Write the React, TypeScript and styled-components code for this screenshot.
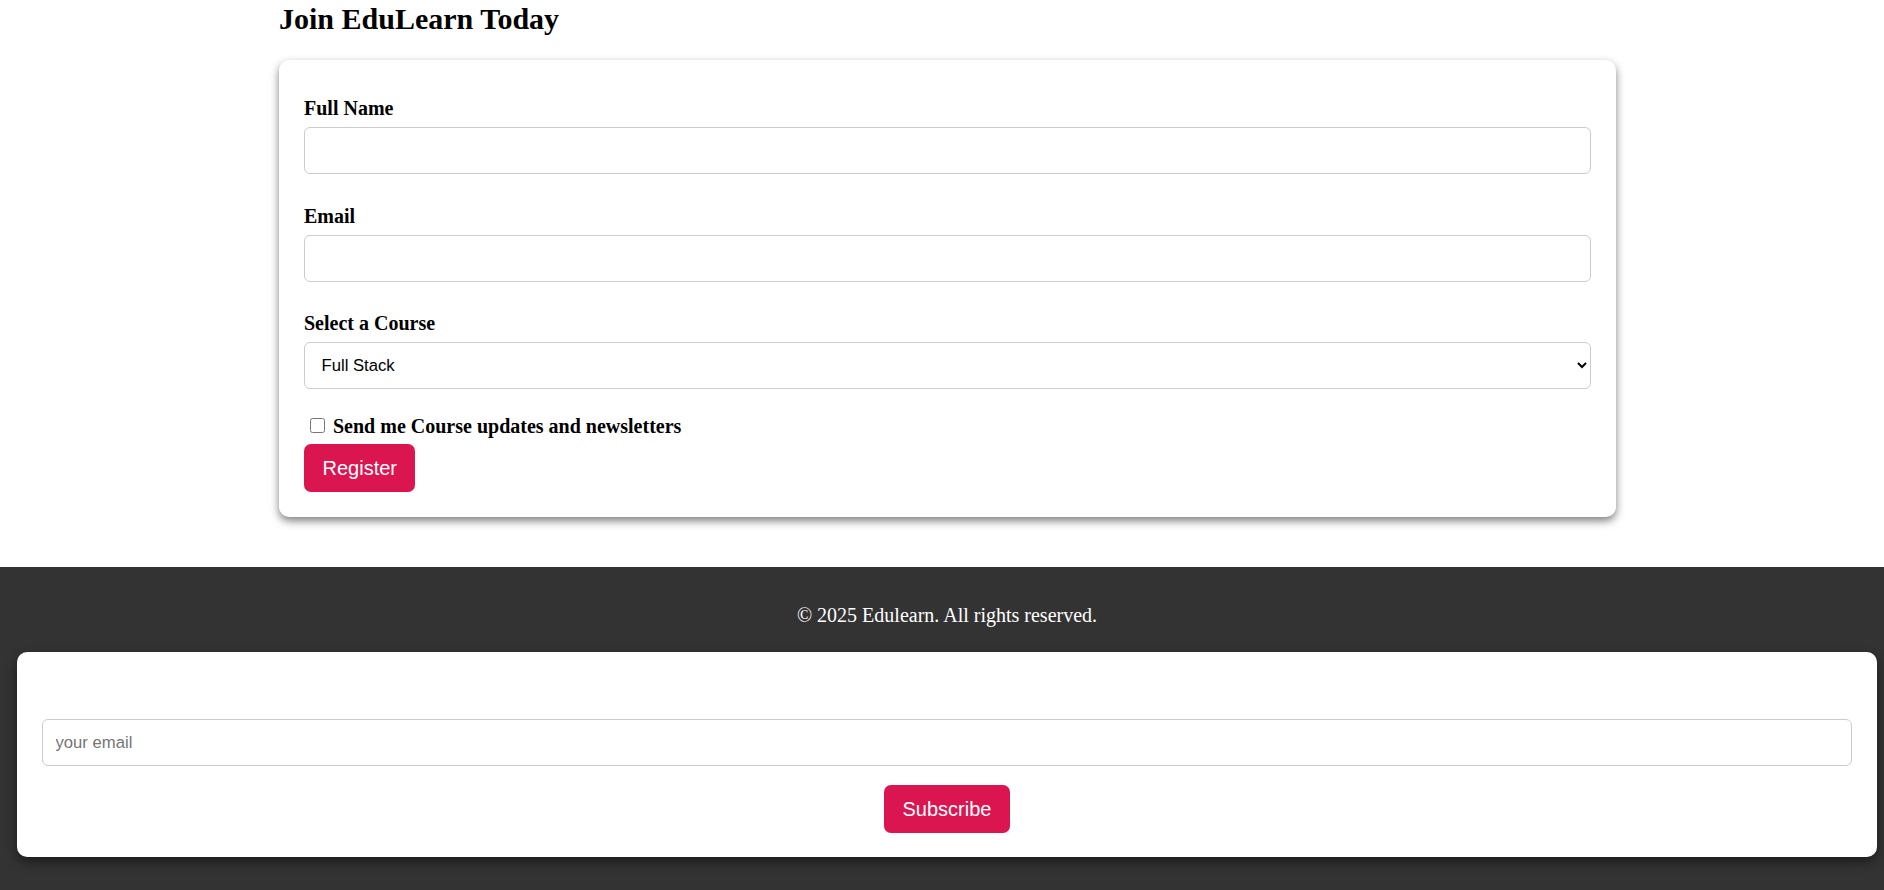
import React from "react";
import styled, { createGlobalStyle } from "styled-components";

const GlobalStyle = createGlobalStyle`
  html, body {
    margin: 0;
    padding: 0;
    background: #ffffff;
    font-family: "Liberation Serif", "Times New Roman", serif;
    color: #000000;
  }
  * { box-sizing: border-box; }
`;

const Main = styled.main`
  width: 1337px;
  margin-left: 279px;
  padding-top: 1px;
  padding-bottom: 50px;
`;

const Title = styled.h2`
  margin: 0 0 24px;
  font-size: 30px;
  font-weight: bold;
  line-height: 35px;
`;

const Card = styled.form`
  background: #ffffff;
  border-radius: 10px;
  box-shadow: 0 4px 9px rgba(0, 0, 0, 0.5);
  padding: 37px 25px 25px;
  display: flex;
  flex-direction: column;
`;

const Field = styled.div`
  display: flex;
  flex-direction: column;
  margin-bottom: 30.5px;
  &:last-of-type { margin-bottom: 0; }
`;

const Label = styled.label`
  display: block;
  font-size: 20px;
  font-weight: bold;
  line-height: 23px;
  margin-bottom: 7px;
`;

const TextInput = styled.input`
  width: 100%;
  height: 47px;
  padding: 0 12.5px;
  border: 1px solid #cccccc;
  border-radius: 6px;
  font-family: "Liberation Sans", Arial, sans-serif;
  font-size: 16.67px;
  color: #000;
  background: #fff;
  outline: none;
  &::placeholder { color: #757575; }
`;

const Select = styled.select`
  width: 100%;
  height: 47px;
  padding: 0 12.5px;
  border: 1px solid #cccccc;
  border-radius: 6px;
  font-family: "Liberation Sans", Arial, sans-serif;
  font-size: 16.67px;
  color: #000;
  background-color: #fff;
  outline: none;
`;

const CheckRow = styled.label`
  display: block;
  margin-top: 26px;
  font-size: 20px;
  font-weight: bold;
  line-height: 23px;
`;

const Check = styled.input`
  width: 15px;
  height: 15px;
  margin: 0 3px 0 6px;
  vertical-align: baseline;
`;

const Button = styled.button<{ $top?: number }>`
  align-self: ${(p) => (p.$top !== undefined ? "center" : "flex-start")};
  margin-top: ${(p) => p.$top ?? 6}px;
  background: #da1550;
  color: #ffffff;
  border: none;
  border-radius: 7px;
  padding: 12.5px 18.5px;
  font-family: "Liberation Sans", Arial, sans-serif;
  font-size: 20px;
  line-height: 23px;
  cursor: pointer;
`;

const Footer = styled.footer`
  background: #333333;
  padding: 37px 7px 33px 17px;
`;

const Copy = styled.p`
  margin: 0 0 25px;
  color: #ffffff;
  font-size: 20px;
  line-height: 23px;
  text-align: center;
`;

const SubscribeCard = styled.form`
  background: #ffffff;
  border-radius: 10px;
  box-shadow: 0 5px 12px rgba(0, 0, 0, 0.45);
  padding: 67px 25px 24px;
  display: flex;
  flex-direction: column;
`;

export default function App() {
  return (
    <>
      <GlobalStyle />
      <Main>
        <Title>Join EduLearn Today</Title>
        <Card onSubmit={(e) => e.preventDefault()}>
          <Field>
            <Label htmlFor="name">Full Name</Label>
            <TextInput id="name" type="text" />
          </Field>
          <Field>
            <Label htmlFor="email">Email</Label>
            <TextInput id="email" type="email" />
          </Field>
          <Field>
            <Label htmlFor="course">Select a Course</Label>
            <Select id="course" defaultValue="fullstack">
              <option value="fullstack">Full Stack</option>
              <option value="frontend">Frontend</option>
              <option value="backend">Backend</option>
            </Select>
          </Field>
          <CheckRow>
            <Check type="checkbox" /> Send me Course updates and newsletters
          </CheckRow>
          <Button type="submit">Register</Button>
        </Card>
      </Main>
      <Footer>
        <Copy>© 2025 Edulearn. All rights reserved.</Copy>
        <SubscribeCard onSubmit={(e) => e.preventDefault()}>
          <TextInput type="email" placeholder="your email" />
          <Button type="submit" $top={19}>
            Subscribe
          </Button>
        </SubscribeCard>
      </Footer>
    </>
  );
}
